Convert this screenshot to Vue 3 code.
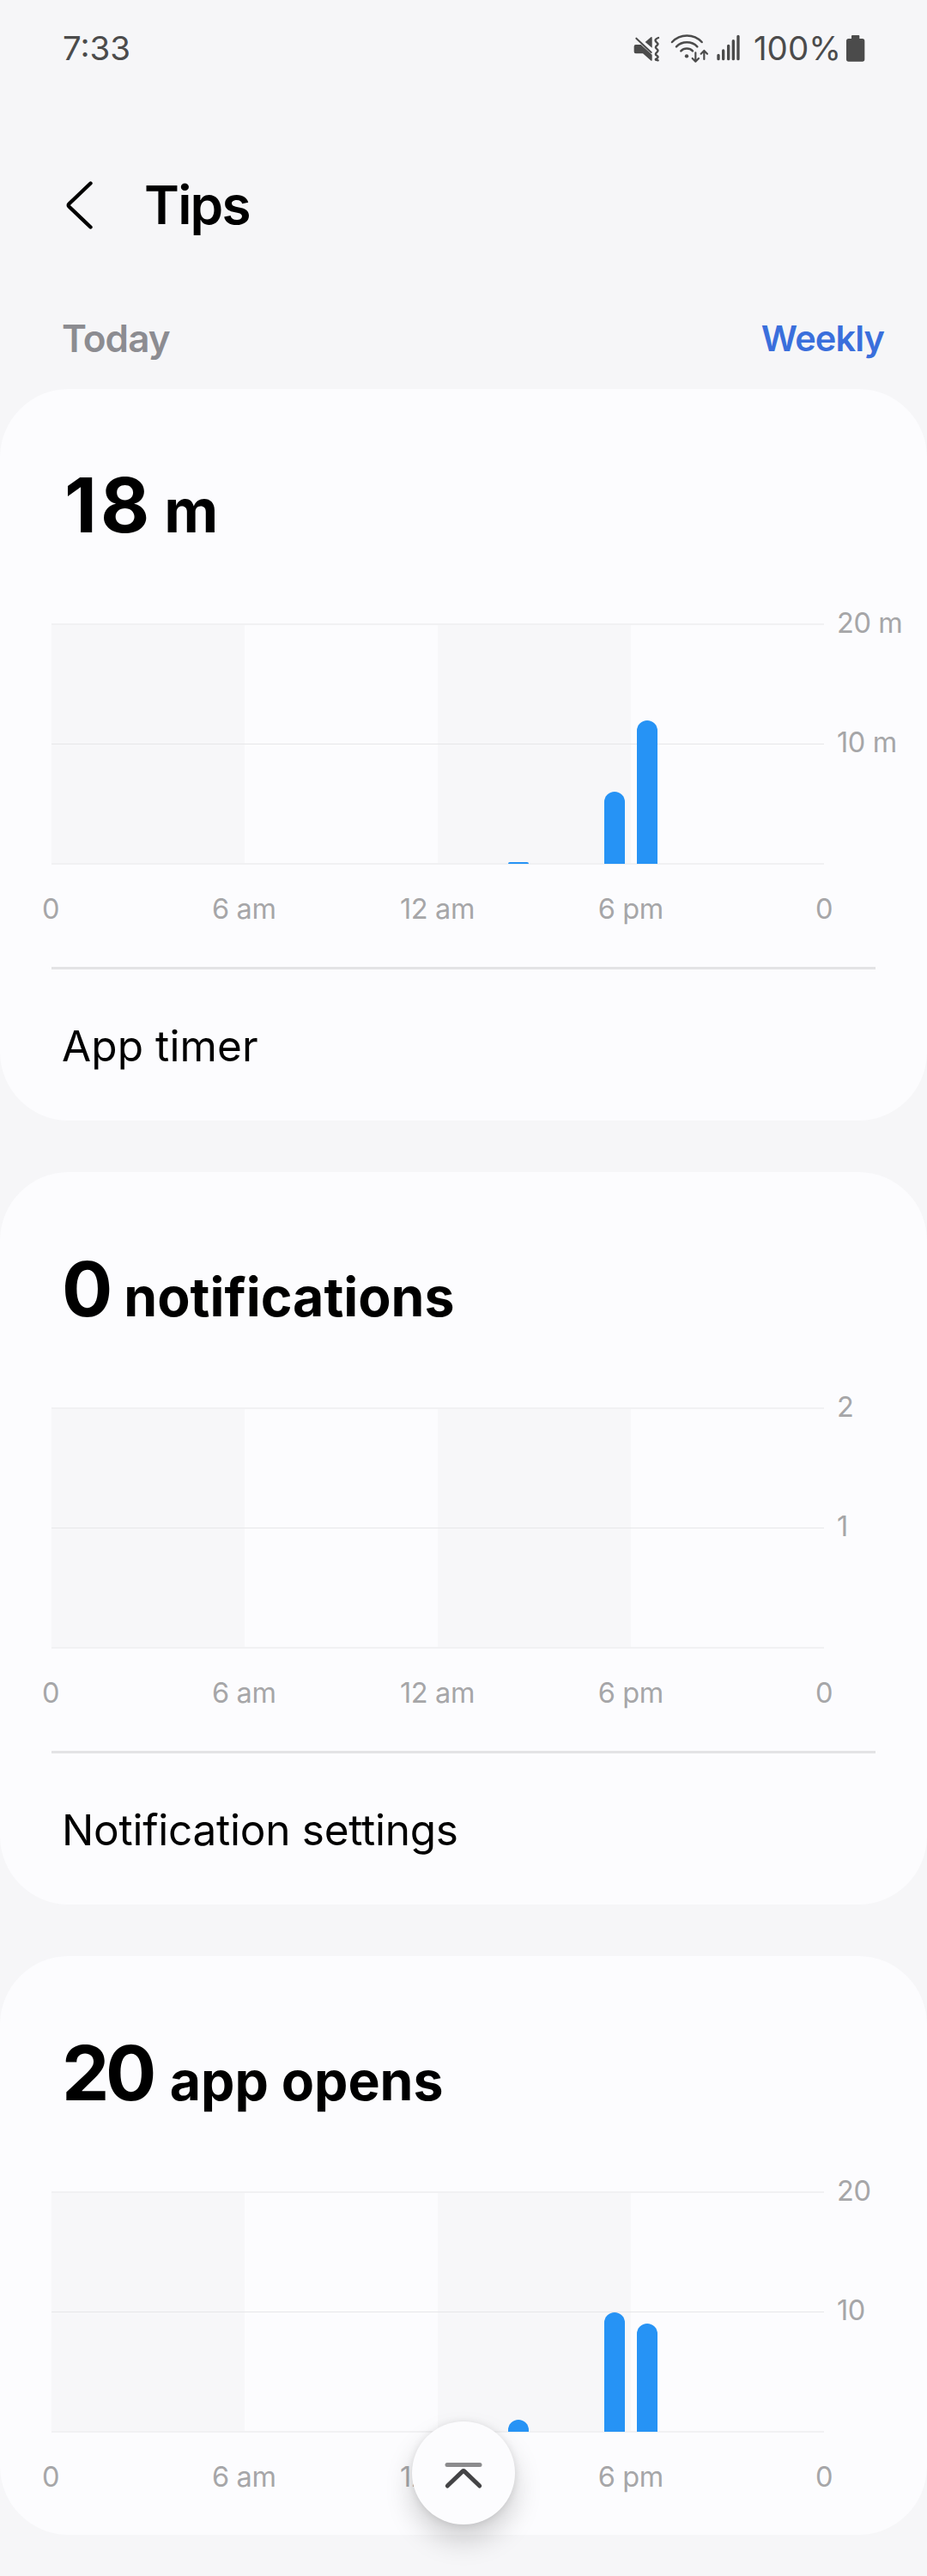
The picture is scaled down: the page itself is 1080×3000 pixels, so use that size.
<script setup>
const hours = Array.from({ length: 24 }, (_, h) => h)
const ticks = ['0', '6 am', '12 am', '6 pm', '0']

const cards = [
  {
    id: 'time', value: '18', unit: 'm', labels: ['20 m', '10 m'], max: 20,
    bars: { 14: 0.12, 17: 6, 18: 12 }, action: 'App timer'
  },
  {
    id: 'notifications', value: '0', unit: 'notifications', labels: ['2', '1'], max: 2,
    bars: {}, action: 'Notification settings'
  },
  {
    id: 'opens', value: '20', unit: 'app opens', labels: ['20', '10'], max: 20,
    bars: { 14: 1, 17: 10, 18: 9 }, action: ''
  }
]

const barHeight = (card, h) => `${(card.bars[h] / card.max) * 279}px`
</script>

<template>
  <div class="screen">
    <header class="status">
      <span class="clock">7:33</span>
      <div class="indicators">
        <svg class="mute" viewBox="112 54 96 102" width="32" height="34">
          <path d="M153 84 173 67Q177 64 177 69V104Z" fill="#4b4b4b" />
          <path d="M120 93H138L177 128V146Q177 152 172 148L145 124H120Q114 124 114 118V99Q114 93 120 93Z" fill="#4b4b4b" />
          <path d="M122 71 174 120" stroke="#4b4b4b" stroke-width="6" stroke-linecap="round" />
          <path d="M199 69C189 73 186 78 191 83L197 89C201 95 187 97 190 104L197 112C201 118 187 121 190 128L197 134C201 141 187 142 190 146L198 148" fill="none" stroke="#4b4b4b" stroke-width="7" stroke-linecap="round" />
        </svg>
        <svg class="wifi" viewBox="243 54 135 105" width="45" height="35">
          <g fill="none" stroke="#4b4b4b" stroke-width="7.5" stroke-linecap="round" stroke-linejoin="round">
            <path d="M249 84C277 54 325 54 353 84" />
            <path d="M264 100C284 80 318 80 337 100" />
            <path d="M280 115C291 104 310 104 321 115" />
            <path d="M331 121V151M320 141 331 152 342 141" stroke-width="6.5" />
            <path d="M361 144V115M350 125 361 114 372 125" stroke-width="6.5" />
          </g>
          <circle cx="300" cy="133" r="6.5" fill="#4b4b4b" />
        </svg>
        <svg class="signal" viewBox="402 60 87 96" width="29" height="32">
          <path d="M411 133V146M428 117V146M446 100V146M463 83V146M480 67V146" stroke="#4b4b4b" stroke-width="10" stroke-linecap="round" />
        </svg>
        <span class="percent">100%</span>
        <svg class="battery" viewBox="855 57 69 96" width="23" height="32">
          <path d="M879 60H901Q904 60 904 63V72H914Q922 72 922 80V144Q922 152 914 152H866Q858 152 858 144V80Q858 72 866 72H876V63Q876 60 879 60Z" fill="#4b4b4b" />
        </svg>
      </div>
    </header>

    <div class="appbar">
      <svg class="back" viewBox="0 0 32 58" width="32" height="58">
        <path d="M28.5 3.5 3.6 27.2Q1.8 29 3.6 30.8L28.5 54.5" fill="none" stroke="#000" stroke-width="4.4" stroke-linecap="round" />
      </svg>
      <h1>Tips</h1>
    </div>

    <div class="subhead">
      <span class="today">Today</span>
      <span class="weekly">Weekly</span>
    </div>

    <main>
      <section v-for="card in cards" :key="card.id" class="card" :class="card.id">
        <h2>
          <span class="value">{{ card.value }}</span>
          <span class="unit">{{ card.unit }}</span>
        </h2>
        <div class="chart">
          <div class="plot">
            <div v-for="h in hours" :key="h" class="hour">
              <div v-if="card.bars[h]" class="bar" :style="{ height: barHeight(card, h) }"></div>
            </div>
          </div>
          <div class="scale">
            <span v-for="label in card.labels" :key="label">{{ label }}</span>
          </div>
        </div>
        <div class="ticks">
          <span v-for="(tick, i) in ticks" :key="i">{{ tick }}</span>
        </div>
        <div v-if="card.action" class="action">{{ card.action }}</div>
      </section>
    </main>

    <button class="to-top" aria-label="Go to top">
      <svg viewBox="0 0 48 36" width="48" height="36">
        <path d="M5 4.5H43" stroke="#8b8b8d" stroke-width="5" stroke-linecap="round" />
        <path d="M5.3 29 22.9 12.2Q24 11.2 25.1 12.2L42.7 29" fill="none" stroke="#444446" stroke-width="5" stroke-linecap="round" />
      </svg>
    </button>
  </div>
</template>

<style>
body {
  margin: 0;
  background: #f6f6f8;
}
</style>

<style scoped>
.screen {
  position: relative;
  width: 1080px;
  height: 3000px;
  overflow: hidden;
  background: #f6f6f8;
  color: #000;
  font-family: Inter, Roboto, sans-serif;
  white-space: nowrap;
}
svg { display: block; flex: none; }

.status {
  display: flex;
  justify-content: space-between;
  align-items: center;
  height: 112px;
  padding: 0 72px 0 73px;
  color: #4b4b4b;
  font-size: 38.5px;
}
.clock { letter-spacing: 0; }
.indicators { display: flex; align-items: center; }
.wifi { margin-left: 11px; }
.signal { margin-left: 8px; }
.percent { margin-left: 15px; letter-spacing: 0; }
.battery { margin-left: 5px; }

.appbar {
  display: flex;
  align-items: center;
  height: 253px;
  padding-left: 77px;
}
h1 {
  margin: 0 0 0 59px;
  font-size: 62px;
  font-weight: 600;
  letter-spacing: -1.8px;
}

.subhead {
  display: flex;
  justify-content: space-between;
  align-items: center;
  height: 58px;
  margin-bottom: 30px;
  padding: 0 50px 0 72px;
  font-weight: 600;
}
.today { color: #8c8c91; font-size: 44px; letter-spacing: -0.9px; }
.weekly { color: #3a6fdc; font-size: 41.5px; letter-spacing: -0.9px; }

main {
  display: flex;
  flex-direction: column;
  gap: 60px;
}
.card {
  border-radius: 80px;
  background: #fcfcfe;
}
h2 {
  box-sizing: border-box;
  display: flex;
  align-items: baseline;
  height: 274px;
  margin: 0;
  padding: 92px 0 0 72px;
  font-weight: 700;
  line-height: 88px;
}
.time h2 { height: 273px; padding: 91px 0 0 75px; }
.value { font-size: 88px; letter-spacing: -2px; }
.unit { margin-left: 20px; font-size: 62.5px; letter-spacing: 0; }
.time .value { letter-spacing: 4px; }
.time .unit { margin-left: 13px; font-size: 69px; }
.notifications .unit { margin-left: 15px; }
.opens .value { letter-spacing: -4.5px; }

.chart {
  display: flex;
  height: 281px;
  padding-left: 60px;
}
.plot {
  display: flex;
  align-items: flex-end;
  box-sizing: border-box;
  width: 900px;
  padding-bottom: 1px;
  background:
    linear-gradient(#f1f1f3, #f1f1f3) 0 0 / 100% 2px no-repeat,
    linear-gradient(#e7e7e9, #e7e7e9) 0 140px / 100% 1px no-repeat,
    linear-gradient(#f1f1f3, #f1f1f3) 0 279px / 100% 2px no-repeat,
    linear-gradient(90deg, #f7f7f9 50%, transparent 50%) 0 0 / 450px 100%;
}
.hour {
  display: flex;
  justify-content: center;
  width: 37.5px;
}
.bar {
  width: 24px;
  border-radius: 12px 12px 0 0;
  background: #2693f5;
}
.scale {
  display: flex;
  flex-direction: column;
  margin: -16px 0 0 15px;
}
.scale span { height: 139px; line-height: 32px; }
.scale, .ticks {
  color: #a6a6a8;
  font-size: 32.5px;
  letter-spacing: -0.4px;
}
.ticks {
  display: flex;
  justify-content: space-between;
  width: 901px;
  height: 119px;
  margin-left: 59px;
  line-height: 103px;
}
.ticks span {
  display: flex;
  justify-content: center;
  width: 0;
}
.action {
  height: 176px;
  margin: 0 60px;
  padding-left: 12px;
  border-top: 3px solid #e3e3e5;
  font-size: 49.5px;
  letter-spacing: -0.25px;
  line-height: 178px;
}
.time .action { letter-spacing: 0.1px; }
.to-top {
  position: absolute;
  left: 480px;
  top: 2820px;
  display: flex;
  justify-content: center;
  width: 120px;
  height: 120px;
  padding: 46px 0 0;
  border: 0;
  border-radius: 50%;
  background: #fcfcfe;
  box-shadow: 0 18px 32px rgba(0, 0, 0, 0.18), 0 1px 10px rgba(0, 0, 0, 0.1);
}
</style>
